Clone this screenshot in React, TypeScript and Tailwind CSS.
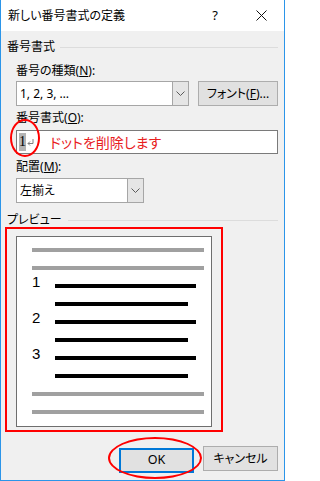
import React from 'react';

const ui = "font-['Noto_Sans','Noto_Sans_CJK_JP',sans-serif] [font-feature-settings:'palt']";

const Chevron = () => (
  <svg width="9" height="5" viewBox="0 0 9 5">
    <path d="M0.5 0.5 L4.5 4.5 L8.5 0.5" fill="none" stroke="#5a5a5a" strokeWidth="1" />
  </svg>
);

const Combo = ({ value, width, height }: { value: string; width: string; height: string }) => (
  <div className={`flex ${width} ${height} border border-[#a6a6a6] bg-white`}>
    <div className="flex-1 flex items-center pl-[3px] text-[12px] text-black">{value}</div>
    <div className="w-[16px] flex items-center justify-center bg-[#e5e5e5] border-l border-[#a6a6a6]">
      <Chevron />
    </div>
  </div>
);

const Group = ({ title, gap }: { title: string; gap: string }) => (
  <div className="flex items-center h-[14px] pl-[6px] pr-[6px]">
    <span className="text-[12px] leading-[14px] text-black">{title}</span>
    <div className={`flex-1 h-px bg-[#dcdcdc] ${gap}`} />
  </div>
);

const Label = ({ text, acc, mt }: { text: string; acc: string; mt: string }) => (
  <div className={`${mt} pl-[15px] h-[14px] text-[12px] leading-[14px] text-black`}>
    {text}(<span className="underline">{acc}</span>):
  </div>
);

const GrayLine = () => <div className="w-[172px] h-[4px] bg-[#a0a0a0]" />;

const NumRow = ({ n }: { n: string }) => (
  <div className="flex items-start">
    <span className="w-[23px] -mt-[10px] text-[15px] leading-none text-black font-['Liberation_Sans',sans-serif]">{n}</span>
    <div className="flex flex-col gap-[14px]">
      <div className="w-[141px] h-[4px] bg-black" />
      <div className="w-[133px] h-[4px] bg-black" />
    </div>
  </div>
);

const App: React.FC = () => {
  return (
    <div className={`w-[285px] h-[481px] flex flex-col bg-[#f0f0f0] border-x border-b border-[#2b95e9] ${ui}`}>
      {/* Title bar */}
      <div className="h-[31px] bg-white flex items-center pl-[7px] shrink-0">
        <span className="text-[12px] text-black">新しい番号書式の定義</span>
        <span className="ml-auto w-[46px] text-center text-[13px] text-black">?</span>
        <div className="w-[46px] flex justify-center">
          <svg width="11" height="11" viewBox="0 0 11 11">
            <path d="M0.5 0.5 L10.5 10.5 M10.5 0.5 L0.5 10.5" stroke="#111" strokeWidth="1" />
          </svg>
        </div>
      </div>

      {/* Body */}
      <div className="flex flex-col">
        <div className="mt-[9px]">
          <Group title="番号書式" gap="ml-[5px]" />
        </div>

        <Label text="番号の種類" acc="N" mt="mt-[10px]" />
        <div className="mt-[3px] pl-[15px] flex">
          <Combo value="1, 2, 3, …" width="w-[173px]" height="h-[25px]" />
          <button className="ml-[9px] w-[80px] h-[25px] border border-[#adadad] bg-[#e1e1e1] text-[12px] text-black">
            フォント(<span className="underline">F</span>)...
          </button>
        </div>

        <Label text="番号書式" acc="O" mt="mt-[5px]" />
        <div className="mt-[5px] pl-[15px]">
          <div className="relative w-[262px] h-[24px] border border-[#7a7a7a] bg-white flex items-center pl-[2px]">
            <span className="bg-[#b4b4b4] h-[18px] leading-[18px] text-[14px] text-black font-['Liberation_Serif',serif]">1</span>
            <svg className="ml-[1px]" width="7" height="7" viewBox="0 0 7 7">
              <path d="M6 0 V4.5 H1 M3 2.5 L1 4.5 L3 6.5" fill="none" stroke="#808080" strokeWidth="1" />
            </svg>
            <span className="ml-[16px] text-[14px] text-[#e8201e]">ドットを削除します</span>
            <div className="absolute left-[-7px] top-[-12px] w-[30px] h-[38px] rounded-[50%] border-2 border-[#ff0000]" />
          </div>
        </div>

        <Label text="配置" acc="M" mt="mt-[6px]" />
        <div className="mt-[4px] pl-[15px]">
          <Combo value="左揃え" width="w-[128px]" height="h-[25px]" />
        </div>

        <div className="mt-[10px]">
          <Group title="プレビュー" gap="ml-[6px]" />
        </div>

        {/* Preview */}
        <div className="ml-[4px] w-[218px] h-[205px] border-2 border-[#ff0000] pl-[9px] pt-[7px]">
          <div className="w-[196px] h-[191px] bg-white border border-[#6e6e6e] pl-[15px] pt-[11px] flex flex-col gap-[14px]">
            <GrayLine />
            <GrayLine />
            <NumRow n="1" />
            <NumRow n="2" />
            <NumRow n="3" />
            <GrayLine />
            <GrayLine />
          </div>
        </div>

        {/* Buttons */}
        <div className="mt-[14px] pr-[6px] flex justify-end gap-[9px]">
          <div className="relative">
            <button className="w-[75px] h-[25px] border-2 border-[#0078d7] bg-[#e1e1e1] text-[12.5px] font-normal text-black">OK</button>
            <div className="absolute left-[-11px] top-[-9px] w-[94px] h-[42px] rounded-[50%] border-2 border-[#ff0000]" />
          </div>
          <button className="w-[75px] h-[25px] border border-[#adadad] bg-[#e1e1e1] text-[12px] text-black">キャンセル</button>
        </div>
      </div>
    </div>
  );
};

export default App;
